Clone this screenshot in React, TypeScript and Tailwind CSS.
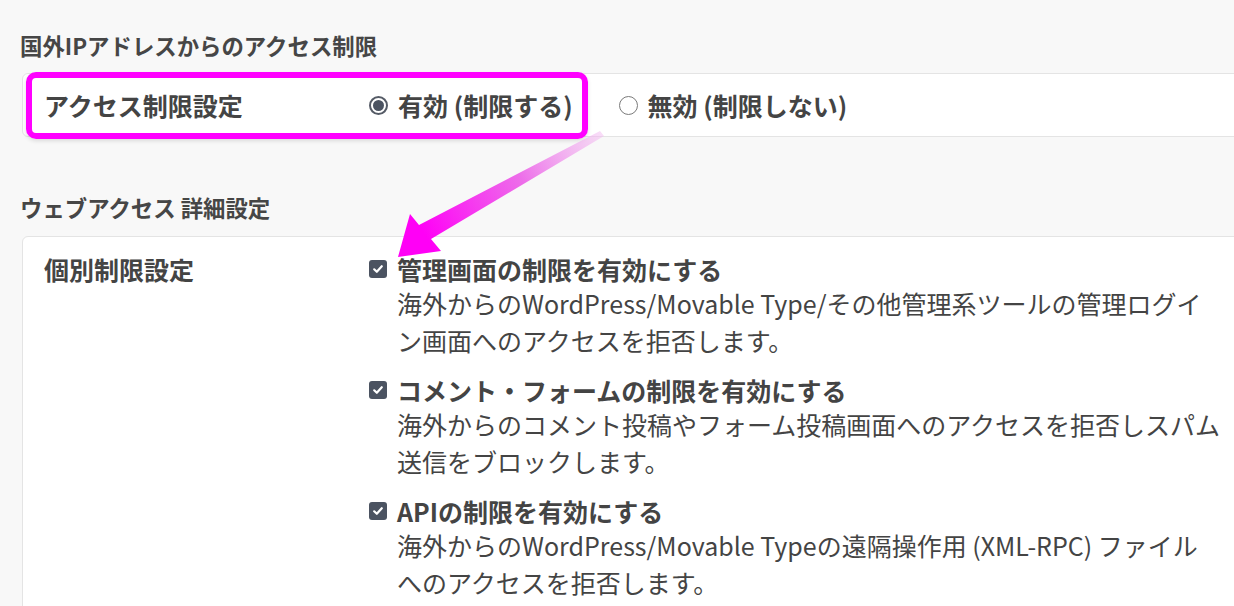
import React from "react";

function Radio({ checked }: { checked: boolean }) {
  return checked ? (
    <span className="flex h-[19px] w-[19px] shrink-0 items-center justify-center rounded-full border-2 border-[#555b66] bg-white">
      <span className="h-[11px] w-[11px] rounded-full bg-[#4b5361]" />
    </span>
  ) : (
    <span className="h-[19px] w-[19px] shrink-0 rounded-full border-[1.5px] border-[#7a7a7a] bg-white" />
  );
}

function Check() {
  return (
    <span className="mt-[7px] flex h-[18px] w-[18px] shrink-0 items-center justify-center rounded-[3px] bg-[#4b5361]">
      <svg width="12" height="12" viewBox="0 0 12 12">
        <path d="M2.2 6.3 L4.8 8.8 L9.8 3.2" fill="none" stroke="#fff" strokeWidth="2.2" strokeLinecap="round" strokeLinejoin="round" />
      </svg>
    </span>
  );
}

const items: { title: string; lines: string[] }[] = [
  {
    title: "管理画面の制限を有効にする",
    lines: [
      "海外からのWordPress/Movable Type/その他管理系ツールの管理ログイ",
      "ン画面へのアクセスを拒否します。",
    ],
  },
  {
    title: "コメント・フォームの制限を有効にする",
    lines: [
      "海外からのコメント投稿やフォーム投稿画面へのアクセスを拒否しスパム",
      "送信をブロックします。",
    ],
  },
  {
    title: "APIの制限を有効にする",
    lines: [
      "海外からのWordPress/Movable Typeの遠隔操作用 (XML-RPC) ファイル",
      "へのアクセスを拒否します。",
    ],
  },
];

export default function App() {
  return (
    <div className="relative h-[606px] w-[1234px] overflow-hidden bg-[#f8f8f8] font-['Noto_Sans_CJK_JP','Noto_Sans',sans-serif] text-[#444]">
      <div className="pl-[20px] pt-[30px]">
        <h2 className="text-[22.4px] font-bold leading-[30px] text-[#464646]">国外IPアドレスからのアクセス制限</h2>

        <div className="relative -mr-[60px] ml-[2px] mt-[13px] flex h-[64px] items-center rounded-[6px] border border-[#e4e4e4] bg-white">
          <div className="w-[346px] shrink-0 pl-[21px] text-[25px] font-bold leading-[30px]">アクセス制限設定</div>
          <div className="flex items-center gap-[10px]">
            <Radio checked />
            <span className="whitespace-nowrap text-[25px] font-bold leading-[30px]">有効 (制限する)</span>
          </div>
          <div className="ml-[46px] flex items-center gap-[10px]">
            <Radio checked={false} />
            <span className="whitespace-nowrap text-[25px] font-bold leading-[30px]">無効 (制限しない)</span>
          </div>
          <div className="pointer-events-none absolute left-[3px] top-[-2px] h-[67px] w-[562px] rounded-[10px] border-[6px] border-[#ff00ff] shadow-[0_2px_4px_rgba(0,0,0,0.12)]" />
        </div>

        <h2 className="mt-[55px] text-[22.4px] font-bold leading-[30px] text-[#464646]">ウェブアクセス 詳細設定</h2>

        <div className="-mr-[60px] ml-[2px] mt-[14px] flex rounded-[6px] border border-[#e4e4e4] bg-white pb-[40px] pt-[16px]">
          <div className="mt-[2px] w-[346px] shrink-0 pl-[21px] text-[25px] font-bold leading-[28px]">個別制限設定</div>
          <div className="flex flex-col gap-[15px]">
            {items.map((it) => (
              <div key={it.title} className="flex gap-[10px]">
                <Check />
                <div>
                  <div className="whitespace-nowrap text-[25px] font-bold leading-[32px]">{it.title}</div>
                  {it.lines.map((l) => (
                    <div key={l} className="whitespace-nowrap text-[25px] leading-[37px]">{l}</div>
                  ))}
                </div>
              </div>
            ))}
          </div>
        </div>
      </div>

      <svg className="pointer-events-none absolute left-0 top-0" width="1234" height="606" viewBox="0 0 1234 606">
        <defs>
          <linearGradient id="arrowGrad" gradientUnits="userSpaceOnUse" x1="600" y1="133" x2="425" y2="235">
            <stop offset="0" stopColor="#f2b8f0" stopOpacity="0.5" />
            <stop offset="0.45" stopColor="#ec5ee8" stopOpacity="0.9" />
            <stop offset="1" stopColor="#ff00f6" />
          </linearGradient>
        </defs>
        <path d="M600,131 L604,136 L431,239 L441,251 L398,257 L410,214 L419,225 Z" fill="url(#arrowGrad)" />
      </svg>
    </div>
  );
}
